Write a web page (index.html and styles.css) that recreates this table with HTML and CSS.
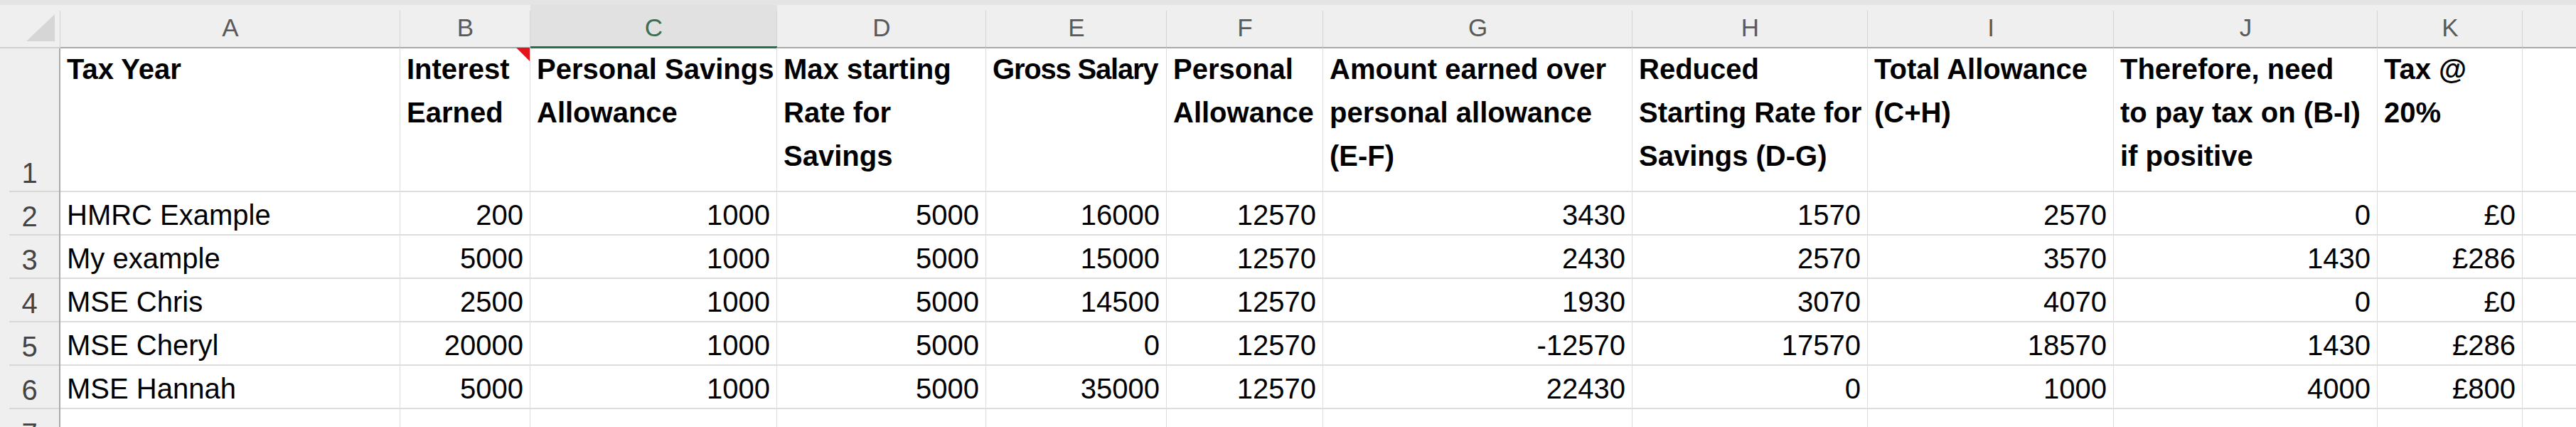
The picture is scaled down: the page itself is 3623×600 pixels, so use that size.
FILE: index.html
```html
<!DOCTYPE html>
<html lang="en">
<head>
<meta charset="utf-8">
<title>Savings tax sheet</title>
<link rel="stylesheet" href="styles.css">
</head>
<body>
<div class="sheet">
  <div class="strip"></div>
  <div class="row head">
    <div class="corner"><svg class="selall" width="40" height="38" viewBox="0 0 40 38"><polygon points="40,0 40,38 0,38" fill="#d6d6d6"/></svg></div>
    <div class="ch">A</div>
    <div class="ch">B</div>
    <div class="ch sel">C</div>
    <div class="ch">D</div>
    <div class="ch">E</div>
    <div class="ch">F</div>
    <div class="ch">G</div>
    <div class="ch">H</div>
    <div class="ch">I</div>
    <div class="ch">J</div>
    <div class="ch">K</div>
    <div class="ch last"></div>
  </div>
  <div class="row r1">
    <div class="rh">1</div>
    <div class="c h">Tax Year</div>
    <div class="c h comment">Interest<br>Earned</div>
    <div class="c h">Personal Savings<br>Allowance</div>
    <div class="c h">Max starting<br>Rate for<br>Savings</div>
    <div class="c h tight">Gross Salary</div>
    <div class="c h">Personal<br>Allowance</div>
    <div class="c h">Amount earned over<br>personal allowance<br>(E-F)</div>
    <div class="c h">Reduced<br>Starting Rate for<br>Savings (D-G)</div>
    <div class="c h">Total Allowance<br>(C+H)</div>
    <div class="c h">Therefore, need<br>to pay tax on (B-I)<br>if positive</div>
    <div class="c h">Tax @<br>20%</div>
    <div class="c last"></div>
  </div>
  <div class="row">
    <div class="rh">2</div>
    <div class="c">HMRC Example</div>
    <div class="c n">200</div><div class="c n">1000</div><div class="c n">5000</div><div class="c n">16000</div><div class="c n">12570</div><div class="c n">3430</div><div class="c n">1570</div><div class="c n">2570</div><div class="c n">0</div><div class="c n">£0</div>
    <div class="c last"></div>
  </div>
  <div class="row">
    <div class="rh">3</div>
    <div class="c">My example</div>
    <div class="c n">5000</div><div class="c n">1000</div><div class="c n">5000</div><div class="c n">15000</div><div class="c n">12570</div><div class="c n">2430</div><div class="c n">2570</div><div class="c n">3570</div><div class="c n">1430</div><div class="c n">£286</div>
    <div class="c last"></div>
  </div>
  <div class="row">
    <div class="rh">4</div>
    <div class="c">MSE Chris</div>
    <div class="c n">2500</div><div class="c n">1000</div><div class="c n">5000</div><div class="c n">14500</div><div class="c n">12570</div><div class="c n">1930</div><div class="c n">3070</div><div class="c n">4070</div><div class="c n">0</div><div class="c n">£0</div>
    <div class="c last"></div>
  </div>
  <div class="row">
    <div class="rh">5</div>
    <div class="c">MSE Cheryl</div>
    <div class="c n">20000</div><div class="c n">1000</div><div class="c n">5000</div><div class="c n">0</div><div class="c n">12570</div><div class="c n">-12570</div><div class="c n">17570</div><div class="c n">18570</div><div class="c n">1430</div><div class="c n">£286</div>
    <div class="c last"></div>
  </div>
  <div class="row">
    <div class="rh">6</div>
    <div class="c">MSE Hannah</div>
    <div class="c n">5000</div><div class="c n">1000</div><div class="c n">5000</div><div class="c n">35000</div><div class="c n">12570</div><div class="c n">22430</div><div class="c n">0</div><div class="c n">1000</div><div class="c n">4000</div><div class="c n">£800</div>
    <div class="c last"></div>
  </div>
  <div class="row">
    <div class="rh">7</div>
    <div class="c"></div><div class="c"></div><div class="c"></div><div class="c"></div><div class="c"></div><div class="c"></div><div class="c"></div><div class="c"></div><div class="c"></div><div class="c"></div><div class="c"></div>
    <div class="c last"></div>
  </div>
</div>
</body>
</html>
```

FILE: styles.css
```css
html, body {
  margin: 0;
  padding: 0;
  background: #ffffff;
}
body {
  font-family: "Liberation Sans", Arial, sans-serif;
  color: #000000;
  overflow: hidden;
}
.sheet {
  width: 3623px;
  height: 600px;
  overflow: hidden;
}
.strip {
  height: 7px;
  background: #e4e4e4;
}
.row {
  display: grid;
  grid-template-columns: 85px 478px 183px 347px 294px 254px 220px 435px 331px 346px 371px 204px 75px;
  height: 61px;
}
.row.head {
  height: 60px;
}
.row.r1 {
  height: 203px;
}

/* column headers */
.corner {
  position: relative;
  box-sizing: border-box;
  background: #efefef linear-gradient(#d2d2d2, #d2d2d2) right bottom / 1px calc(100% - 8px) no-repeat;
  border-bottom: 2px solid #d0d0d0;
}
.selall {
  position: absolute;
  left: 37px;
  top: 13px;
}
.ch {
  box-sizing: border-box;
  background: #efefef linear-gradient(#d4d4d4, #d4d4d4) right bottom / 1px calc(100% - 8px) no-repeat;
  border-bottom: 2px solid #a9a9a9;
  text-align: center;
  font-size: 35px;
  line-height: 53px;
  padding-top: 5px;
  color: #5a5a5a;
}
.ch.sel {
  background-color: #e1e1e1;
  border-bottom: 3px solid #217346;
  color: #3d6d52;
}
.ch.last {
  background-image: none;
}

/* row headers */
.rh {
  box-sizing: border-box;
  background: #efefef linear-gradient(#d8d8d8, #d8d8d8) right bottom / calc(100% - 13px) 2px no-repeat;
  border-right: 2px solid #ababab;
  text-align: center;
  font-size: 40px;
  line-height: 44px;
  padding-top: 12px;
  color: #444444;
}
.r1 .rh {
  padding-top: 154px;
}

/* cells */
.c {
  box-sizing: border-box;
  border-right: 1px solid #dcdcdc;
  border-bottom: 2px solid #dddddd;
  padding: 10px 9px 0 9px;
  font-size: 40px;
  line-height: 44px;
  white-space: nowrap;
  overflow: hidden;
}
.c.n {
  text-align: right;
}
.c.h {
  font-weight: bold;
  line-height: 61px;
  padding-top: 0;
}
.c.h.tight {
  letter-spacing: -1.2px;
  padding-right: 4px;
}
.c.last {
  border-right: none;
}
.comment {
  position: relative;
}
.comment::after {
  content: "";
  position: absolute;
  top: 0;
  right: 0;
  width: 0;
  height: 0;
  border-top: 19px solid #e3141b;
  border-left: 19px solid transparent;
}
```
